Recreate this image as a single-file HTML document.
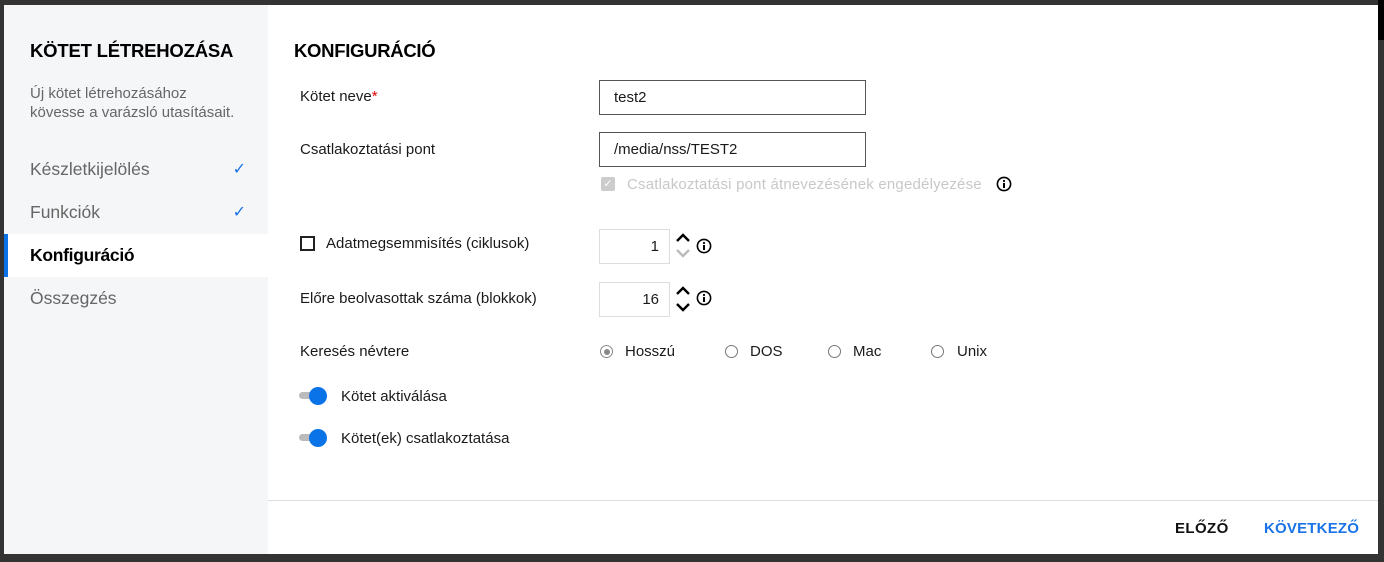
<!DOCTYPE html>
<html><head><meta charset="utf-8"><style>
*{margin:0;padding:0;box-sizing:border-box}
body{width:1384px;height:562px;background:#333;font-family:"Liberation Sans",Roboto,sans-serif;position:relative;overflow:hidden;color:#1a1a1a}
.dlg{position:absolute;left:4px;top:5px;width:1374px;height:549px;background:#fff}
.side{position:absolute;left:0;top:0;width:264px;height:549px;background:#f5f6f8}
.abs{position:absolute;white-space:nowrap}
.nav{position:absolute;left:0;width:264px;height:43px;font-size:17.5px;color:#666;padding-left:26px;line-height:43px}
.chk{position:absolute;right:22px;top:0;color:#1a73e8;font-size:16px}
.lbl{font-size:15px;color:#1a1a1a}
.inp{position:absolute;border:1px solid #555;height:35px;font-size:15px;line-height:33px;padding-left:14px;background:#fff}
.num{position:absolute;border:1px solid #ddd;width:71px;height:35px;font-size:15px;line-height:33px;text-align:right;padding-right:10px}
.info{position:absolute;width:16px;height:16px}
.radio{position:absolute;width:13px;height:13px;border:1px solid #777;border-radius:50%}
.tog{position:absolute}
.tog .tr{position:absolute;left:0;top:5px;width:26px;height:7px;background:#bbb;border-radius:4px}
.tog .kn{position:absolute;left:10px;top:0;width:18px;height:18px;background:#0a73e8;border-radius:50%}
.chev{position:absolute;width:16px;height:10px}
</style></head><body>
<div class="abs" style="right:0;top:0;width:6px;height:40px;background:#000"></div>
<div class="dlg">
<div class="side">
<div class="abs" style="left:26px;top:35px;font-size:18.5px;font-weight:bold;color:#000;letter-spacing:-0.2px">KÖTET LÉTREHOZÁSA</div>
<div class="abs" style="left:26px;top:79px;font-size:15px;color:#666;line-height:19px">Új kötet létrehozásához<br>kövesse a varázsló utasításait.</div>
<div class="nav" style="top:143px">Készletkijelölés<span class="chk">✓</span></div>
<div class="nav" style="top:186px">Funkciók<span class="chk">✓</span></div>
<div class="nav" style="top:229px;background:#fff;color:#000;font-weight:bold;border-left:4px solid #0a73e8;padding-left:22px;letter-spacing:-0.3px">Konfiguráció</div>
<div class="nav" style="top:272px">Összegzés</div>
</div>
<div class="abs" style="left:290px;top:35px;font-size:18.5px;font-weight:bold;color:#000;letter-spacing:-0.3px">KONFIGURÁCIÓ</div>
<div class="abs lbl" style="left:296px;top:83px">Kötet neve<span style="color:#d00">*</span></div>
<div class="inp" style="left:595px;top:75px;width:267px">test2</div>
<div class="abs lbl" style="left:296px;top:136px">Csatlakoztatási pont</div>
<div class="inp" style="left:595px;top:127px;width:267px">/media/nss/TEST2</div>
<div class="abs" style="left:597px;top:172px;width:14px;height:14px;background:#ccc;border-radius:2px;color:#fff;font-size:11px;text-align:center;line-height:14px">✓</div>
<div class="abs" style="left:623px;top:171px;font-size:15px;color:#c8c8c8;letter-spacing:0.2px">Csatlakoztatási pont átnevezésének engedélyezése</div>
<svg class="info" style="left:992px;top:171px" viewBox="0 0 16 16"><circle cx="8" cy="8" r="6.6" fill="none" stroke="#000" stroke-width="1.6"/><circle cx="8" cy="5" r="1.1"/><rect x="7" y="7" width="2" height="5"/></svg>
<div class="abs" style="left:296px;top:231px;width:15px;height:15px;border:2px solid #222"></div>
<div class="abs lbl" style="left:322px;top:230px">Adatmegsemmisítés (ciklusok)</div>
<div class="num" style="left:595px;top:224px">1</div>
<svg class="chev" style="left:671px;top:228px" viewBox="0 0 16 10"><path d="M2 8 L8 2 L14 8" fill="none" stroke="#000" stroke-width="2.4"/></svg>
<svg class="chev" style="left:671px;top:243px" viewBox="0 0 16 10"><path d="M2 2 L8 8 L14 2" fill="none" stroke="#bbb" stroke-width="2.4"/></svg>
<svg class="info" style="left:692px;top:233px" viewBox="0 0 16 16"><circle cx="8" cy="8" r="6.6" fill="none" stroke="#000" stroke-width="1.6"/><circle cx="8" cy="5" r="1.1"/><rect x="7" y="7" width="2" height="5"/></svg>
<div class="abs lbl" style="left:296px;top:285px">Előre beolvasottak száma (blokkok)</div>
<div class="num" style="left:595px;top:277px">16</div>
<svg class="chev" style="left:671px;top:281px" viewBox="0 0 16 10"><path d="M2 8 L8 2 L14 8" fill="none" stroke="#000" stroke-width="2.4"/></svg>
<svg class="chev" style="left:671px;top:297px" viewBox="0 0 16 10"><path d="M2 2 L8 8 L14 2" fill="none" stroke="#000" stroke-width="2.4"/></svg>
<svg class="info" style="left:692px;top:285px" viewBox="0 0 16 16"><circle cx="8" cy="8" r="6.6" fill="none" stroke="#000" stroke-width="1.6"/><circle cx="8" cy="5" r="1.1"/><rect x="7" y="7" width="2" height="5"/></svg>
<div class="abs lbl" style="left:296px;top:338px">Keresés névtere</div>
<div class="radio" style="left:596px;top:340px;border-color:#888"><div style="position:absolute;left:2.5px;top:2.5px;width:6px;height:6px;border-radius:50%;background:#888"></div></div>
<div class="abs lbl" style="left:621px;top:338px">Hosszú</div>
<div class="radio" style="left:721px;top:340px"></div>
<div class="abs lbl" style="left:746px;top:338px">DOS</div>
<div class="radio" style="left:824px;top:340px"></div>
<div class="abs lbl" style="left:849px;top:338px">Mac</div>
<div class="radio" style="left:927px;top:340px"></div>
<div class="abs lbl" style="left:953px;top:338px">Unix</div>
<div class="tog" style="left:295px;top:382px"><div class="tr"></div><div class="kn"></div></div>
<div class="abs lbl" style="left:337px;top:383px">Kötet aktiválása</div>
<div class="tog" style="left:295px;top:424px"><div class="tr"></div><div class="kn"></div></div>
<div class="abs lbl" style="left:337px;top:425px">Kötet(ek) csatlakoztatása</div>
<div class="abs" style="left:264px;top:495px;width:1110px;height:1px;background:#ddd"></div>
<div class="abs" style="left:1171px;top:515px;font-size:15px;font-weight:bold;letter-spacing:0.4px;color:#111">ELŐZŐ</div>
<div class="abs" style="left:1260px;top:515px;font-size:15px;font-weight:bold;letter-spacing:0.2px;color:#1a73e8">KÖVETKEZŐ</div>
</div>
</body></html>
